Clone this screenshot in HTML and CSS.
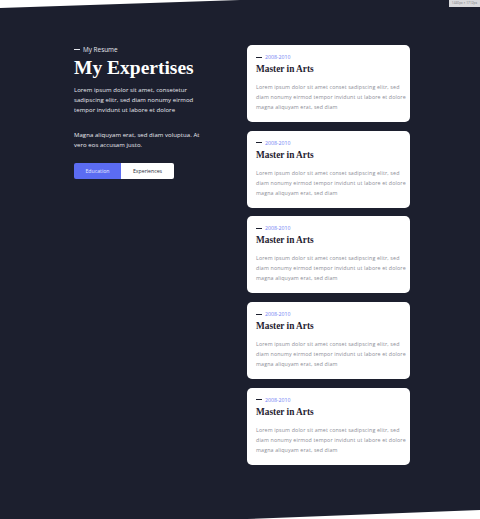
FILE: index.html
```html
<!DOCTYPE html>
<html>
<head>
<meta charset="utf-8">
<link rel="stylesheet" href="styles.css">
</head>
<body>
<section class="resume">
  <div class="size-badge">1440px × 1712px</div>
  <div class="intro">
    <p class="eyebrow"><span class="dash"></span>My Resume</p>
    <h1 class="title">My Expertises</h1>
    <p class="lead">Lorem ipsum dolor sit amet, consetetur<br>sadipscing elitr, sed diam nonumy eirmod<br>tempor invidunt ut labore et dolore</p>
    <p class="lead second">Magna aliquyam erat, sed diam voluptua. At<br>vero eos accusam justo.</p>
    <div class="tabs">
      <button class="tab active">Education</button>
      <button class="tab">Experiences</button>
    </div>
  </div>
  <div class="cards">
    <div class="card">
      <p class="date"><span class="dash dark"></span>2008-2010</p>
      <h2 class="card-title">Master in Arts</h2>
      <p class="card-text">Lorem ipsum dolor sit amet conset sadipscing elitr, sed<br>diam nonumy eirmod tempor invidunt ut labore et dolore<br>magna aliquyam erat, sed diam</p>
    </div>
    <div class="card">
      <p class="date"><span class="dash dark"></span>2008-2010</p>
      <h2 class="card-title">Master in Arts</h2>
      <p class="card-text">Lorem ipsum dolor sit amet conset sadipscing elitr, sed<br>diam nonumy eirmod tempor invidunt ut labore et dolore<br>magna aliquyam erat, sed diam</p>
    </div>
    <div class="card">
      <p class="date"><span class="dash dark"></span>2008-2010</p>
      <h2 class="card-title">Master in Arts</h2>
      <p class="card-text">Lorem ipsum dolor sit amet conset sadipscing elitr, sed<br>diam nonumy eirmod tempor invidunt ut labore et dolore<br>magna aliquyam erat, sed diam</p>
    </div>
    <div class="card">
      <p class="date"><span class="dash dark"></span>2008-2010</p>
      <h2 class="card-title">Master in Arts</h2>
      <p class="card-text">Lorem ipsum dolor sit amet conset sadipscing elitr, sed<br>diam nonumy eirmod tempor invidunt ut labore et dolore<br>magna aliquyam erat, sed diam</p>
    </div>
    <div class="card">
      <p class="date"><span class="dash dark"></span>2008-2010</p>
      <h2 class="card-title">Master in Arts</h2>
      <p class="card-text">Lorem ipsum dolor sit amet conset sadipscing elitr, sed<br>diam nonumy eirmod tempor invidunt ut labore et dolore<br>magna aliquyam erat, sed diam</p>
    </div>
  </div>
</section>
</body>
</html>
```
FILE: styles.css
```css
* { box-sizing: border-box; }
html, body { margin: 0; padding: 0; }
body {
  background: #ffffff;
  font-family: "Open Sans", "Liberation Sans", sans-serif;
  width: 480px;
  height: 519px;
  overflow: hidden;
}
.resume {
  position: relative;
  height: 519px;
  background: #1c1f2e;
  clip-path: polygon(0 8px, 240px 0, 100% 0, 100% 510px, 247px 100%, 0 100%);
  display: flex;
  padding: 45px 0 0 74px;
  gap: 43px;
}
.size-badge {
  position: absolute;
  top: 0;
  right: 0;
  width: 31px;
  height: 7px;
  background: #d9d9dc;
  color: #7a7a80;
  font-size: 3.2px;
  line-height: 7px;
  text-align: center;
  white-space: nowrap;
}
.intro {
  width: 130px;
}
.eyebrow {
  margin: 0;
  display: flex;
  align-items: center;
  gap: 3px;
  color: #e6e7ee;
  font-size: 6.4px;
  line-height: 9px;
}
.dash {
  display: inline-block;
  width: 6px;
  height: 1px;
  background: #e6e7ee;
}
.dash.dark { background: #1c1f2e; width: 6px; }
.title {
  margin: 3px 0 0;
  font-family: "Liberation Serif", "Times New Roman", serif;
  font-weight: 700;
  font-size: 19.5px;
  line-height: 22px;
  color: #ffffff;
  white-space: nowrap;
}
.lead {
  margin: 6px 0 0;
  color: #e9eaf0;
  font-size: 6px;
  letter-spacing: 0.06px;
  line-height: 10.2px;
  white-space: nowrap;
}
.lead.second { margin-top: 14px; line-height: 10.6px; }
.tabs {
  margin-top: 12px;
  display: flex;
}
.tab {
  border: 0;
  margin: 0;
  height: 16px;
  padding: 0;
  font-family: inherit;
  font-size: 5.2px;
  background: #ffffff;
  color: #2a2d3a;
}
.tab.active {
  width: 47px;
  background: #5b6cf2;
  color: #e6e9ff;
  border-radius: 2px 0 0 2px;
}
.tab:not(.active) {
  width: 53px;
  border-radius: 0 2px 2px 0;
}
.cards {
  width: 163px;
  display: flex;
  flex-direction: column;
  gap: 8.7px;
}
.card {
  background: #ffffff;
  border-radius: 5px;
  height: 77px;
  padding: 8px 9px 0;
}
.date {
  margin: 0;
  display: flex;
  align-items: center;
  gap: 3px;
  color: #6f7ef3;
  font-size: 5.2px;
  line-height: 8px;
}
.card-title {
  margin: 2px 0 0;
  font-family: "Liberation Serif", "Times New Roman", serif;
  font-weight: 700;
  font-size: 9.3px;
  line-height: 12px;
  color: #1f2230;
}
.card-text {
  margin: 7px 0 0;
  color: #8c8d96;
  font-size: 5.3px;
  letter-spacing: 0.14px;
  line-height: 10px;
  white-space: nowrap;
}
```
